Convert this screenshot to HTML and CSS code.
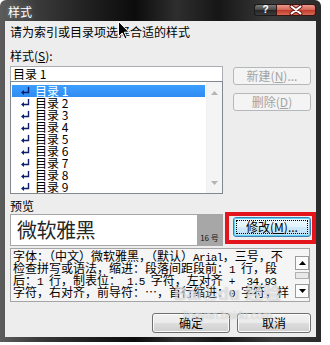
FILE: index.html
```html
<!DOCTYPE html>
<html lang="zh-CN">
<head>
<meta charset="utf-8">
<title>样式</title>
<link rel="stylesheet" href="styles.css">
</head>
<body>
<div class="window">
  <div class="titlebar">
    <span class="title">样式</span>
    <div class="caption">
      <span class="cap-help">?</span>
      <span class="cap-close"><svg width="14" height="10" viewBox="0 0 14 10"><path d="M2.5 1.5 L11.5 8.5 M11.5 1.5 L2.5 8.5" stroke="#6b1e16" stroke-width="4" stroke-linecap="round"/><path d="M2.5 1.5 L11.5 8.5 M11.5 1.5 L2.5 8.5" stroke="#ffffff" stroke-width="2" stroke-linecap="round"/></svg></span>
    </div>
  </div>
  <div class="client">
    <p class="prompt">请为索引或目录项选择合适的样式</p>
    <div class="top">
      <div class="left">
        <p class="label">样式(<u>S</u>):</p>
        <div class="input">目录 1</div>
        <div class="list">
          <ul class="rows">
            <li class="row selected"><svg class="ret" width="9" height="8" viewBox="0 0 9 8"><path d="M7.5 0 V5.5 H2" fill="none" stroke="#0b1f6b" stroke-width="1.4"/><path d="M0 5.5 L3 3 V8 Z" fill="#0b1f6b"/></svg><span>目录 1</span></li>
            <li class="row"><svg class="ret" width="9" height="8" viewBox="0 0 9 8"><path d="M7.5 0 V5.5 H2" fill="none" stroke="#0b1f6b" stroke-width="1.4"/><path d="M0 5.5 L3 3 V8 Z" fill="#0b1f6b"/></svg><span>目录 2</span></li>
            <li class="row"><svg class="ret" width="9" height="8" viewBox="0 0 9 8"><path d="M7.5 0 V5.5 H2" fill="none" stroke="#0b1f6b" stroke-width="1.4"/><path d="M0 5.5 L3 3 V8 Z" fill="#0b1f6b"/></svg><span>目录 3</span></li>
            <li class="row"><svg class="ret" width="9" height="8" viewBox="0 0 9 8"><path d="M7.5 0 V5.5 H2" fill="none" stroke="#0b1f6b" stroke-width="1.4"/><path d="M0 5.5 L3 3 V8 Z" fill="#0b1f6b"/></svg><span>目录 4</span></li>
            <li class="row"><svg class="ret" width="9" height="8" viewBox="0 0 9 8"><path d="M7.5 0 V5.5 H2" fill="none" stroke="#0b1f6b" stroke-width="1.4"/><path d="M0 5.5 L3 3 V8 Z" fill="#0b1f6b"/></svg><span>目录 5</span></li>
            <li class="row"><svg class="ret" width="9" height="8" viewBox="0 0 9 8"><path d="M7.5 0 V5.5 H2" fill="none" stroke="#0b1f6b" stroke-width="1.4"/><path d="M0 5.5 L3 3 V8 Z" fill="#0b1f6b"/></svg><span>目录 6</span></li>
            <li class="row"><svg class="ret" width="9" height="8" viewBox="0 0 9 8"><path d="M7.5 0 V5.5 H2" fill="none" stroke="#0b1f6b" stroke-width="1.4"/><path d="M0 5.5 L3 3 V8 Z" fill="#0b1f6b"/></svg><span>目录 7</span></li>
            <li class="row"><svg class="ret" width="9" height="8" viewBox="0 0 9 8"><path d="M7.5 0 V5.5 H2" fill="none" stroke="#0b1f6b" stroke-width="1.4"/><path d="M0 5.5 L3 3 V8 Z" fill="#0b1f6b"/></svg><span>目录 8</span></li>
            <li class="row"><svg class="ret" width="9" height="8" viewBox="0 0 9 8"><path d="M7.5 0 V5.5 H2" fill="none" stroke="#0b1f6b" stroke-width="1.4"/><path d="M0 5.5 L3 3 V8 Z" fill="#0b1f6b"/></svg><span>目录 9</span></li>
          </ul>
          <div class="vscroll">
            <svg width="7" height="4" viewBox="0 0 7 4"><path d="M0 4 L3.5 0 L7 4 Z" fill="#b4b4b4"/></svg>
            <svg width="7" height="4" viewBox="0 0 7 4"><path d="M0 0 L3.5 4 L7 0 Z" fill="#b4b4b4"/></svg>
          </div>
        </div>
      </div>
      <div class="right">
        <button class="btn disabled" disabled>新建(<u>N</u>)...</button>
        <button class="btn disabled" disabled>删除(<u>D</u>)</button>
      </div>
    </div>
    <p class="label preview-label">预览</p>
    <div class="preview-row">
      <div class="preview">
        <span class="sample">微软雅黑</span>
        <div class="size"><span>16 号</span></div>
      </div>
      <div class="modify-wrap">
        <button class="btn modify"><span class="focus">修改(<u>M</u>)...</span></button>
        <div class="redbox"></div>
      </div>
    </div>
    <div class="desc">
      <div class="lines">
        <div class="line">字体：（中文）微软雅黑，（默认）<span class="m">Arial</span>，三号，不</div>
        <div class="line">检查拼写或语法，缩进：段落间距段前：<span class="m">1 </span>行，段</div>
        <div class="line">后：<span class="m">1 </span>行，制表位：<span class="m"> 1.5 </span>字符，左对齐<span class="m"> +  34.93</span></div>
        <div class="line">字符，右对齐，前导符：…，首行缩进：<span class="m">0 </span>字符，样</div>
      </div>
      <div class="cscroll">
        <span class="cbtn"><svg width="7" height="4" viewBox="0 0 7 4"><path d="M0 4 L3.5 0 L7 4 Z" fill="#000"/></svg></span>
        <span class="cthumb"></span>
        <span class="cbtn"><svg width="7" height="4" viewBox="0 0 7 4"><path d="M0 0 L3.5 4 L7 0 Z" fill="#000"/></svg></span>
      </div>
    </div>
    <div class="actions">
      <button class="btn ok">确定</button>
      <button class="btn cancel">取消</button>
    </div>
  </div>
  <svg class="cursor" width="12" height="19" viewBox="0 0 12 19"><path d="M0.5 0.5 V15.5 L4.2 12 L7 18 L9 17 L6.3 11.2 H11 Z" fill="#000" stroke="#fff" stroke-width="1"/></svg>
  <div class="watermark">
    <div class="wm-logo">Bai<span class="paw">❀</span>du 经验</div>
    <div class="wm-url">jingyan.baidu.com</div>
  </div>
</div>
</body>
</html>
```

FILE: styles.css
```css
html, body {
  margin: 0;
  padding: 0;
  background: #ffffff;
}

body {
  font-family: "Noto Sans CJK SC", "Liberation Sans", sans-serif;
  font-size: 12px;
  color: #000;
}

p { margin: 0; }
ul { margin: 0; padding: 0; list-style: none; }

.window {
  position: relative;
  width: 321px;
  height: 342px;
  box-sizing: border-box;
  padding: 0 5px 5px 5px;
  border-radius: 6px 6px 0 0;
  background:
    linear-gradient(90deg, #5c5c5c 0%, #3a3a3a 12%, #1c1c1c 30%, #0c0c0c 42%, #2e2e2e 55%, #161616 68%, #3b3b3b 85%, #2a2a2a 100%);
  display: flex;
  flex-direction: column;
  overflow: hidden;
}

.titlebar {
  height: 21px;
  flex: none;
  display: flex;
  justify-content: space-between;
  align-items: flex-start;
  padding-left: 3px;
}

.title {
  margin-top: 6px;
  line-height: 12px;
  color: #ffffff;
  text-shadow: 0 0 4px rgba(255,255,255,0.35);
}

.caption {
  display: flex;
  margin-top: 4px;
}

.cap-help {
  width: 22px;
  height: 12px;
  box-sizing: border-box;
  border: 1px solid #1a1a1a;
  border-right: none;
  border-radius: 3px 0 0 3px;
  background: linear-gradient(#7a7a7a 0%, #4a4a4a 45%, #262626 55%, #3c3c3c 100%);
  color: #fff;
  font-family: "Liberation Sans", sans-serif;
  font-weight: bold;
  font-size: 10px;
  line-height: 10px;
  text-align: center;
}

.cap-close {
  width: 40px;
  height: 12px;
  box-sizing: border-box;
  border: 1px solid #3a1410;
  border-radius: 0 3px 3px 0;
  background: linear-gradient(#e99a8e 0%, #d4685a 45%, #c23d2c 55%, #d86a55 100%);
  display: flex;
  align-items: center;
  justify-content: center;
}

.client {
  flex: 1;
  background: #ededed;
  padding: 5px 5px 0 5px;
  display: flex;
  flex-direction: column;
}

.prompt, .label {
  line-height: 12px;
  height: 12px;
  white-space: nowrap;
}

.top {
  display: flex;
  gap: 10px;
}

.left {
  width: 213px;
  display: flex;
  flex-direction: column;
}

.left .label { margin-top: 12px; }

.input {
  margin-top: 4px;
  height: 15px;
  box-sizing: border-box;
  border: 1px solid #abadb3;
  border-bottom: none;
  background: #fff;
  padding-left: 2px;
  line-height: 14px;
}

.list {
  height: 113px;
  box-sizing: border-box;
  border: 1px solid #828790;
  background: #fff;
  display: flex;
  overflow: hidden;
}

.rows {
  flex: 1;
  padding: 3px 1px 0 1px;
}

.row {
  height: 12px;
  line-height: 12px;
  display: flex;
  align-items: center;
  padding-left: 9px;
  gap: 5px;
  white-space: nowrap;
}

.row.selected {
  background: linear-gradient(#3d9dff, #2f8cf2);
  color: #fff;
}

.ret { flex: none; }

.vscroll {
  width: 16px;
  background: #f4f4f4;
  border-left: 1px solid #f0f0f0;
  display: flex;
  flex-direction: column;
  align-items: center;
  justify-content: space-between;
  padding: 9px 0 8px;
  box-sizing: border-box;
}

.right {
  width: 78px;
  padding-top: 29px;
  display: flex;
  flex-direction: column;
  gap: 8px;
}

.btn {
  font-family: inherit;
  font-size: 12px;
  margin: 0;
  padding: 0;
  box-sizing: border-box;
  border: 1px solid #707070;
  border-radius: 3px;
  background: linear-gradient(#f2f2f2 0%, #ebebeb 48%, #dddddd 52%, #cfcfcf 100%);
  box-shadow: inset 0 0 0 1px #fbfbfb;
  color: #000;
  line-height: 12px;
}

.btn.disabled {
  height: 18px;
  border-color: #b4b8bb;
  background: #f4f4f4;
  box-shadow: none;
  color: #a3a3a3;
}

.preview-label { margin-top: 6px; }

.preview-row {
  margin-top: 2px;
  display: flex;
  gap: 10px;
}

.preview {
  width: 213px;
  height: 32px;
  box-sizing: border-box;
  border: 1px solid #a6a6a6;
  background: #fff;
  display: flex;
}

.sample {
  flex: 1;
  padding-left: 6px;
  font-size: 20px;
  line-height: 30px;
  color: #262626;
  letter-spacing: -0.5px;
}

.size {
  width: 25px;
  background: #a7a7a7;
  display: flex;
  align-items: flex-end;
  justify-content: center;
  padding-bottom: 3px;
  box-sizing: border-box;
}

.size span {
  font-size: 8px;
  line-height: 8px;
  color: #111;
  white-space: nowrap;
}

.modify-wrap {
  position: relative;
  width: 78px;
  padding-top: 3px;
}

.btn.modify {
  width: 78px;
  height: 20px;
  border-color: #3c7fb1;
  background: linear-gradient(#eef8fe 0%, #e2f3fc 48%, #cfeafa 52%, #bfe2f6 100%);
  box-shadow: inset 0 0 0 1px #5fd0f6;
  display: flex;
  align-items: center;
  justify-content: center;
  padding: 2px;
}

.focus {
  flex: 1;
  align-self: stretch;
  border: 1px dotted #000;
  display: flex;
  align-items: center;
  justify-content: center;
}

.redbox {
  position: absolute;
  left: -8px;
  top: -2px;
  width: 91px;
  height: 32px;
  box-sizing: border-box;
  border: 4px solid #e3141c;
}

.desc {
  margin-top: 2px;
  width: 300px;
  height: 54px;
  box-sizing: border-box;
  border: 1px solid #a5a5a5;
  background: #f5f5f5;
  display: flex;
}

.lines {
  flex: 1;
  min-width: 0;
  padding: 1px 0 0 2px;
}

.line {
  height: 12px;
  line-height: 12px;
  white-space: pre;
}

.m {
  font-family: "Liberation Mono", monospace;
  font-size: 11px;
  letter-spacing: -0.65px;
}

.cscroll {
  width: 14px;
  flex: none;
  padding: 7px 0 3px;
  display: flex;
  flex-direction: column;
  align-items: center;
}

.cbtn {
  width: 14px;
  height: 14px;
  box-sizing: border-box;
  border: 1px solid #9a9a9a;
  background: #fbfbfb;
  display: flex;
  align-items: center;
  justify-content: center;
}

.cthumb {
  width: 14px;
  height: 7px;
  margin: 2px 0 auto;
  box-sizing: border-box;
  border: 1px solid #b0b0b0;
  background: #e8e8e8;
}

.actions {
  margin-top: 11px;
  display: flex;
  justify-content: flex-end;
  gap: 7px;
}

.btn.ok { width: 78px; height: 20px; }
.btn.cancel { width: 74px; height: 20px; }

.cursor {
  position: absolute;
  left: 118px;
  top: 21px;
}

.watermark {
  position: absolute;
  left: 160px;
  top: 283px;
  width: 135px;
  color: rgba(255,255,255,0.55);
  text-shadow: 0 0 1px rgba(120,120,120,0.5);
  font-family: "Liberation Sans", "Noto Sans CJK SC", sans-serif;
  text-align: center;
  pointer-events: none;
}

.wm-logo {
  font-size: 18px;
  font-weight: bold;
  line-height: 22px;
}

.paw { font-size: 16px; }

.wm-url {
  font-size: 11px;
  line-height: 12px;
  margin-top: 3px;
}
```
